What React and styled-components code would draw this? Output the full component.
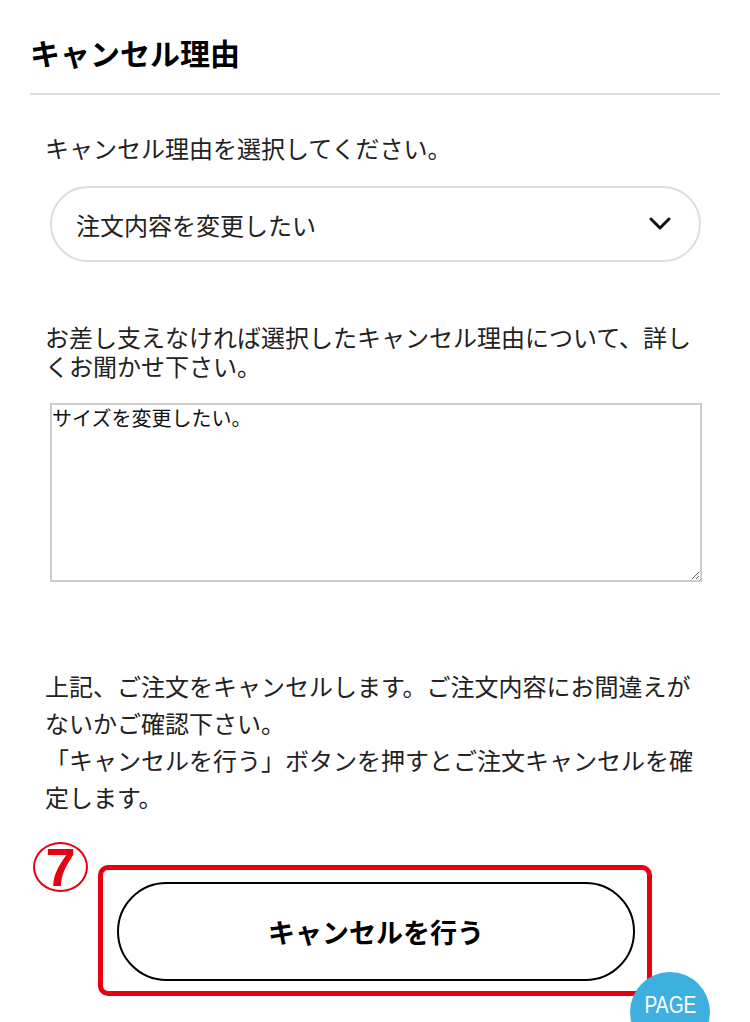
import React from "react"
import styled, { createGlobalStyle } from "styled-components"

const GlobalStyle = createGlobalStyle`
  body {
    margin: 0;
    background: #fff;
    font-family: "Noto Sans CJK JP", "Noto Sans", sans-serif;
    color: #222;
  }
`

const CancelReason = () => {
  return (
    <Page>
      <GlobalStyle />
      <Title>キャンセル理由</Title>
      <Body>
        <Label>キャンセル理由を選択してください。</Label>
        <SelectWrap>
          <Select defaultValue="change">
            <option value="change">注文内容を変更したい</option>
            <option value="mistake">間違えて注文した</option>
            <option value="other">その他</option>
          </Select>
          <Chevron width="22" height="14" viewBox="0 0 22 14">
            <polyline
              points="2,2 11,11 20,2"
              fill="none"
              stroke="#111"
              strokeWidth="3"
              strokeLinecap="round"
              strokeLinejoin="round"
            />
          </Chevron>
        </SelectWrap>

        <Note>
          お差し支えなければ選択したキャンセル理由について、詳しくお聞かせ下さい。
        </Note>
        <Detail defaultValue="サイズを変更したい。" />

        <Confirm>
          上記、ご注文をキャンセルします。ご注文内容にお間違えがないかご確認下さい。
          <br />
          「キャンセルを行う」ボタンを押すとご注文キャンセルを確定します。
        </Confirm>

        <ActionArea>
          <StepMark>7</StepMark>
          <Highlight>
            <CancelButton type="button">キャンセルを行う</CancelButton>
          </Highlight>
        </ActionArea>
      </Body>
      <PageTop href="#">
        <PageTopText>PAGE</PageTopText>
        <PageTopText>TOP</PageTopText>
      </PageTop>
    </Page>
  )
}

export default CancelReason

const Page = styled.div`
  padding: 31px 30px 80px;
`

const Title = styled.h2`
  margin: 0;
  padding-bottom: 20px;
  border-bottom: 2px solid #ddd;
  font-size: 30px;
  line-height: 42px;
  font-weight: 700;
  color: #000;
`

const Body = styled.div`
  padding: 0 15px;
`

const Label = styled.p`
  margin: 38px 0 0;
  font-size: 24px;
  line-height: 29px;
`

const SelectWrap = styled.div`
  position: relative;
  margin: 24px 4px 0 5px;
`

const Select = styled.select`
  display: block;
  width: 100%;
  height: 76px;
  box-sizing: border-box;
  padding: 0 60px 0 24px;
  border: 2px solid #ddd;
  border-radius: 38px;
  background: #fff;
  appearance: none;
  font-family: inherit;
  font-size: 24px;
  color: #222;
  outline: none;
`

const Chevron = styled.svg`
  position: absolute;
  right: 30px;
  top: 31px;
  pointer-events: none;
`

const Note = styled.p`
  margin: 61px 0 0;
  font-size: 24px;
  line-height: 28.5px;
`

const Detail = styled.textarea`
  display: block;
  width: calc(100% - 8px);
  height: 179px;
  box-sizing: border-box;
  margin: 23px 3px 0 5px;
  padding: 1px 0;
  border: 2px solid #ccc;
  font-family: inherit;
  font-size: 20px;
  line-height: 1.2;
  color: #111;
  outline: none;
`

const Confirm = styled.p`
  margin: 85px 0 0;
  font-size: 24px;
  line-height: 37px;
`

const ActionArea = styled.div`
  position: relative;
  display: flex;
  justify-content: center;
  margin-top: 50px;
`

const StepMark = styled.span`
  position: absolute;
  left: -12px;
  top: -23px;
  width: 55px;
  height: 50px;
  box-sizing: border-box;
  border: 2px solid #e60012;
  border-radius: 50%;
  display: flex;
  align-items: center;
  justify-content: center;
  font-family: "Liberation Sans", Arial, sans-serif;
  font-size: 54px;
  font-weight: 700;
  line-height: 1;
  color: #e60012;
`

const Highlight = styled.div`
  width: 554px;
  box-sizing: border-box;
  padding: 12px 12px 10px 14px;
  border: 5px solid #e60012;
  border-radius: 10px;
`

const CancelButton = styled.button`
  display: block;
  width: 100%;
  height: 99px;
  border: 2px solid #000;
  border-radius: 50px;
  background: #fff;
  font-family: inherit;
  font-size: 27px;
  font-weight: 700;
  color: #000;
  cursor: pointer;
`

const PageTop = styled.a`
  position: fixed;
  right: 40px;
  bottom: -30px;
  width: 80px;
  height: 80px;
  box-sizing: border-box;
  padding-top: 19px;
  border-radius: 50%;
  background: #3eb0e0;
  display: flex;
  flex-direction: column;
  align-items: center;
  color: #fff;
  text-decoration: none;
`

const PageTopText = styled.span`
  display: block;
  font-family: "Liberation Sans", Arial, sans-serif;
  font-size: 24px;
  font-weight: 400;
  line-height: 28px;
  transform: scaleX(0.8);
`
